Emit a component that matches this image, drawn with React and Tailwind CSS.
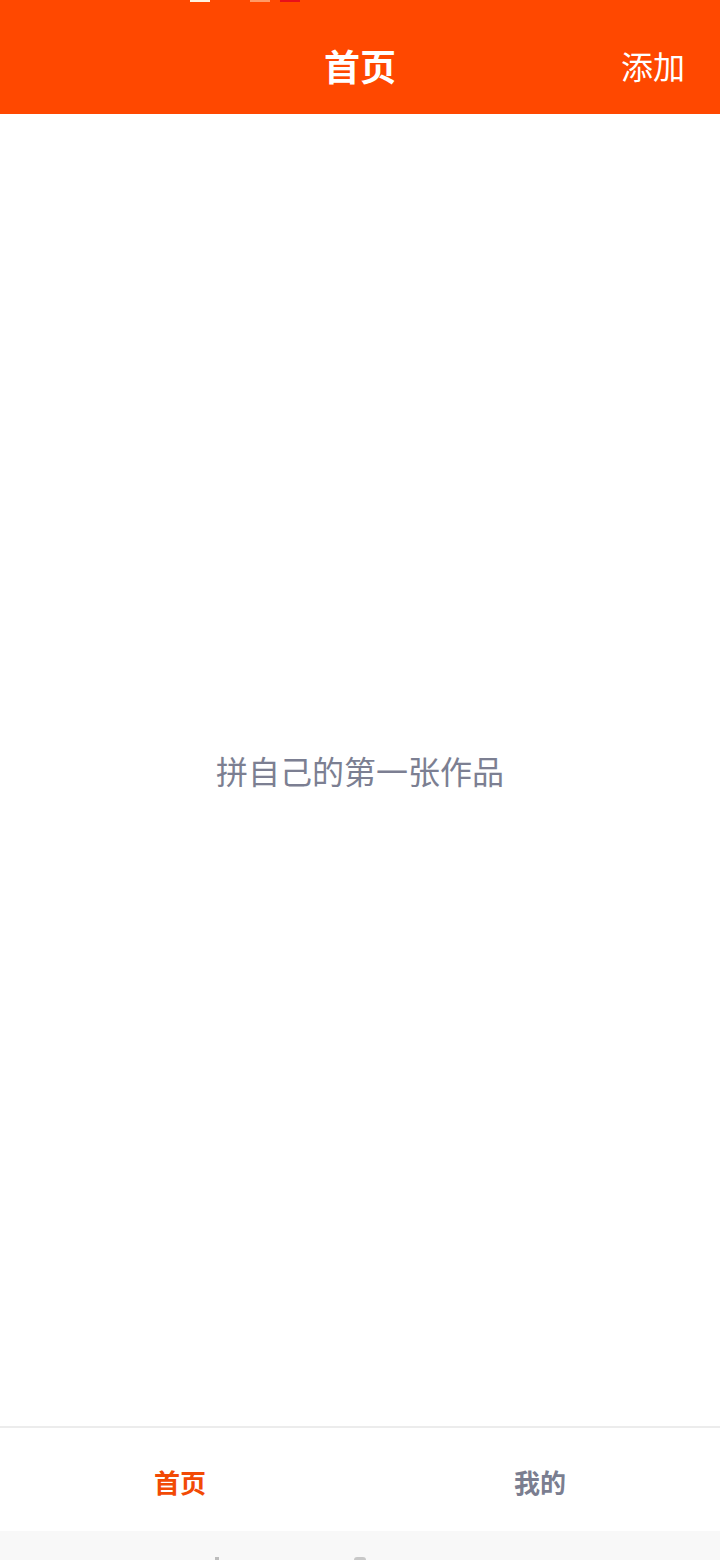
import React from 'react'

const font = { fontFamily: '"Noto Sans CJK SC", "Noto Sans", sans-serif' }

const TabItem = ({ label, active }) => (
    <button className={`flex flex-1 items-center justify-center pt-[4px] text-[26px] font-bold ${active ? 'text-[#f24a05]' : 'text-[#7b7e90]'}`}>
        {label}
    </button>
)

export default function App() {
    return (
        <div style={font} className="flex h-[1560px] w-[720px] flex-col bg-white">
            {/* top bar */}
            <header className="relative flex h-[114px] shrink-0 items-center justify-center bg-[#ff4800] pt-[16px]">
                <div className="absolute left-[190px] top-0 h-[2px] w-[20px] bg-[#fff3e0]"></div>
                <div className="absolute left-[250px] top-0 h-[2px] w-[20px] bg-[#ff9a66]"></div>
                <div className="absolute left-[280px] top-0 h-[2px] w-[20px] bg-[#e8101a]"></div>
                <h1 className="text-[36px] font-bold leading-none text-white">首页</h1>
                <button className="absolute inset-y-0 right-[35px] flex items-center pt-[16px] text-[32px] font-normal leading-none text-white">添加</button>
            </header>

            {/* empty state */}
            <main className="flex flex-1 items-center justify-center">
                <p className="text-[32px] text-[#7c7f92]">拼自己的第一张作品</p>
            </main>

            {/* tab bar */}
            <nav className="flex h-[105px] shrink-0 border-t-2 border-[#ececec] bg-white">
                <TabItem label="首页" active />
                <TabItem label="我的" />
            </nav>

            {/* system nav strip */}
            <div className="relative h-[29px] shrink-0 bg-[#f8f8f8]">
                <div className="absolute bottom-0 left-[215px] h-[3px] w-[4px] bg-[#bdbdbd]"></div>
                <div className="absolute bottom-0 left-[354px] h-[3px] w-[12px] rounded-t bg-[#c8c8c8]"></div>
            </div>
        </div>
    )
}
